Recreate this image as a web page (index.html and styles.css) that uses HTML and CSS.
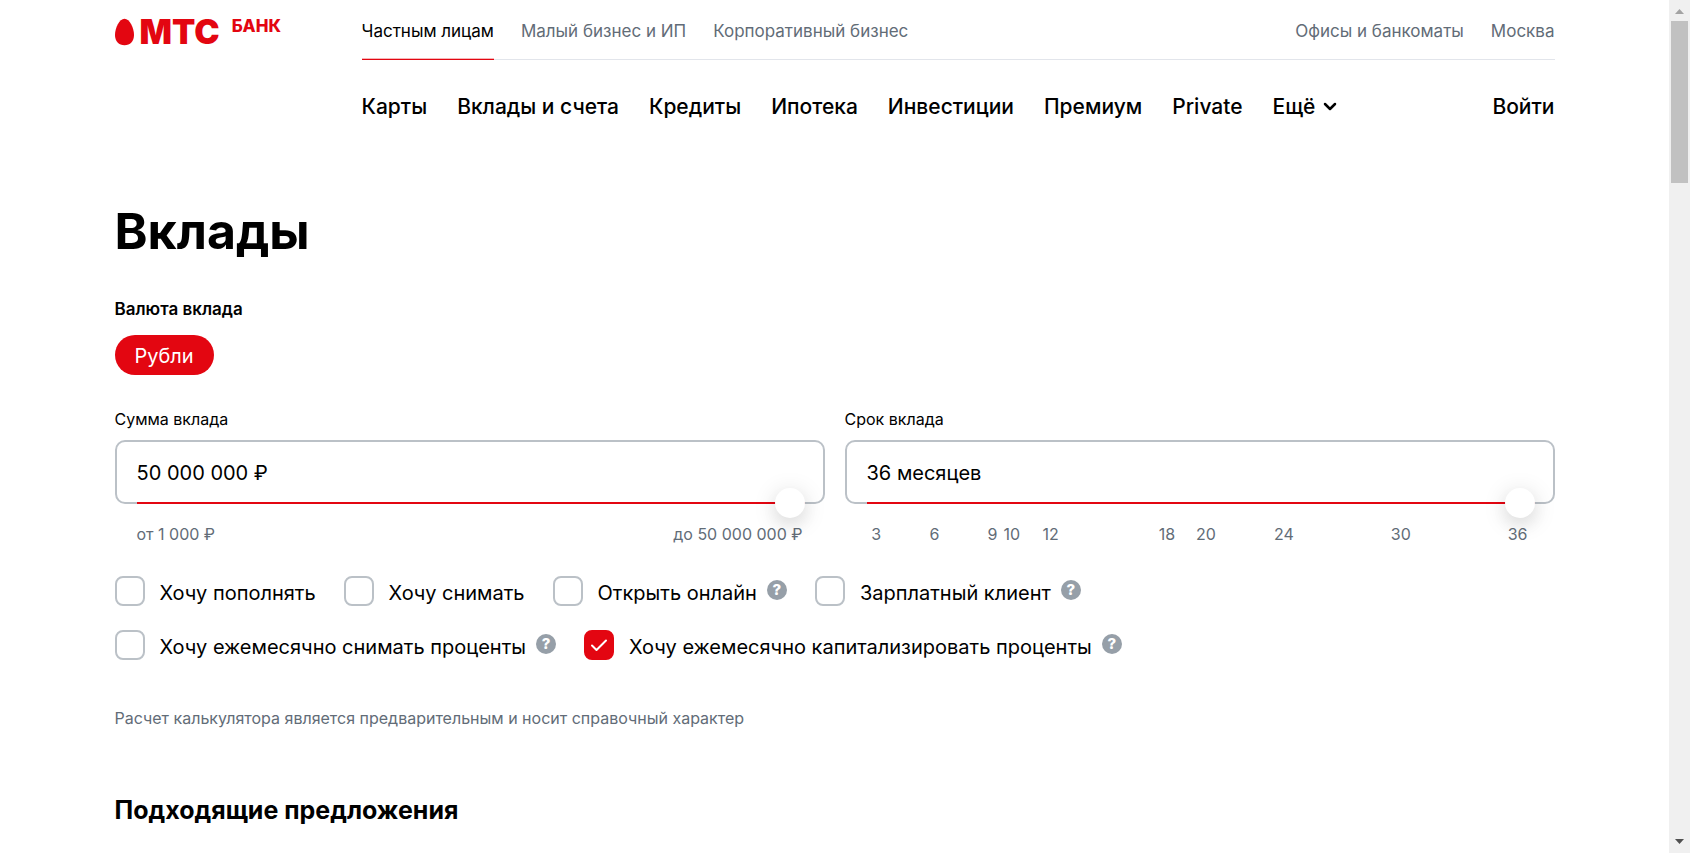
FILE: index.html
```html
<!DOCTYPE html>
<html lang="ru">
<head>
<meta charset="utf-8">
<meta name="viewport" content="width=device-width, initial-scale=1">
<title>Вклады — МТС Банк</title>
<link rel="stylesheet" href="styles.css">
</head>
<body>
<div class="page">
  <header class="header">
    <a class="logo" href="#" aria-label="МТС Банк">
      <svg class="logo__egg" viewBox="0 0 20 28" aria-hidden="true"><path d="M10 0C4.600 0 0 9.600 0 17.200C0 23.800 4 28 10 28S20 23.800 20 17.200C20 9.600 15.400 0 10 0Z"/></svg>
      <span class="logo__name">МТС</span>
      <span class="logo__bank">БАНК</span>
    </a>
    <div class="header__menus">
      <nav class="top-nav" aria-label="Разделы">
        <a class="top-nav__link top-nav__link--active" href="#">Частным лицам</a>
        <a class="top-nav__link" href="#">Малый бизнес и ИП</a>
        <a class="top-nav__link" href="#">Корпоративный бизнес</a>
        <a class="top-nav__link push" href="#">Офисы и банкоматы</a>
        <a class="top-nav__link" href="#">Москва</a>
      </nav>
      <nav class="main-nav" aria-label="Продукты">
        <a href="#">Карты</a>
        <a href="#">Вклады и счета</a>
        <a href="#">Кредиты</a>
        <a href="#">Ипотека</a>
        <a href="#">Инвестиции</a>
        <a href="#">Премиум</a>
        <a href="#">Private</a>
        <button class="more" type="button">Ещё
          <svg class="more__icon" viewBox="0 0 14 10" aria-hidden="true"><path d="M2 2l5 5 5-5"/></svg>
        </button>
        <a class="push" href="#">Войти</a>
      </nav>
    </div>
  </header>

  <main>
    <h1 class="title">Вклады</h1>
    <form class="calculator">
      <p class="currency-label" id="currency">Валюта вклада</p>
      <button class="pill" type="button" aria-describedby="currency">Рубли</button>

      <div class="fields">
        <div class="field">
          <label class="field__label" for="amount">Сумма вклада</label>
          <div class="field__box">
            <input class="field__input" id="amount" type="text" value="50 000 000 ₽">
            <input class="field__range" type="range" min="1000" max="50000000" value="50000000" aria-label="Сумма вклада">
          </div>
          <div class="limits"><span>от 1 000 ₽</span><span>до 50 000 000 ₽</span></div>
        </div>
        <div class="field">
          <label class="field__label" for="term">Срок вклада</label>
          <div class="field__box">
            <input class="field__input" id="term" type="text" value="36 месяцев">
            <input class="field__range" type="range" min="3" max="36" value="36" aria-label="Срок вклада">
          </div>
          <div class="ticks">
            <span style="grid-column:1">3</span>
            <span style="grid-column:4">6</span>
            <span style="grid-column:7">9</span>
            <span style="grid-column:8">10</span>
            <span style="grid-column:10">12</span>
            <span style="grid-column:16">18</span>
            <span style="grid-column:18">20</span>
            <span style="grid-column:22">24</span>
            <span style="grid-column:28">30</span>
            <span style="grid-column:34">36</span>
          </div>
        </div>
      </div>

      <div class="options">
        <div class="options__row">
          <div class="option"><label class="option__label"><input class="check" type="checkbox"><span>Хочу пополнять</span></label></div>
          <div class="option"><label class="option__label"><input class="check" type="checkbox"><span>Хочу снимать</span></label></div>
          <div class="option"><label class="option__label"><input class="check" type="checkbox"><span>Открыть онлайн</span></label><button class="help" type="button">?</button></div>
          <div class="option"><label class="option__label"><input class="check" type="checkbox"><span>Зарплатный клиент</span></label><button class="help" type="button">?</button></div>
        </div>
        <div class="options__row">
          <div class="option"><label class="option__label"><input class="check" type="checkbox"><span>Хочу ежемесячно снимать проценты</span></label><button class="help" type="button">?</button></div>
          <div class="option">
            <label class="option__label">
              <span class="check-wrap">
                <input class="check" type="checkbox" checked>
                <svg class="check-mark" viewBox="0 0 30 30" aria-hidden="true"><path d="M8 15.500l4.500 4.500 9.500-9.500"/></svg>
              </span>
              <span>Хочу ежемесячно капитализировать проценты</span>
            </label><button class="help" type="button">?</button>
          </div>
        </div>
      </div>
      <p class="note">Расчет калькулятора является предварительным и носит справочный характер</p>
    </form>
    <h2 class="subtitle">Подходящие предложения</h2>
  </main>
</div>
<div class="scrollbar" aria-hidden="true">
  <svg class="scrollbar__arrow scrollbar__arrow--off" viewBox="0 0 21 21"><path d="M6 14h9l-4.500-5z"/></svg>
  <div class="scrollbar__thumb"></div>
  <svg class="scrollbar__arrow" viewBox="0 0 21 21"><path d="M6 7h9l-4.500 5z"/></svg>
</div>
</body>
</html>
```
FILE: styles.css
```css
:root {
  --red: #e30611;
  --gray: #626c77;
  --border: #bbc1c7;
}

* { box-sizing: border-box; }

body {
  margin: 0;
  display: flex;
  height: 100vh;
  overflow: hidden;
  background: #fff;
  color: #000;
  font-family: Inter, "Liberation Sans", sans-serif;
  font-size: 20px;
  line-height: 24px;
}

a { color: inherit; text-decoration: none; }
button, input { font: inherit; color: inherit; }
button { border: 0; padding: 0; background: none; cursor: pointer; }
h1, h2, p { margin: 0; }

.page {
  flex: 1;
  min-width: 0;
  overflow: hidden;
  padding: 0 24px;
}
.header, main { max-width: 1440px; margin: 0 auto; }

/* Header */
.header { display: flex; }
.logo {
  display: flex;
  flex: none;
  align-items: flex-start;
  width: 247px;
  padding-top: 18px;
  color: var(--red);
}
.logo__egg { width: 19px; height: 28px; fill: var(--red); }
.logo__name {
  margin-left: 6px;
  font-size: 34px;
  font-weight: 900;
  line-height: 28px;
}
.logo__bank {
  margin-left: 12px;
  font-size: 17px;
  font-weight: 800;
  line-height: 16px;
}
.header__menus { flex: 1; }
.top-nav {
  display: flex;
  gap: 27px;
  height: 60px;
  border-bottom: 1px solid #e2e5eb;
  color: var(--gray);
  font-size: 17px;
  white-space: nowrap;
}
.top-nav__link { height: 60px; line-height: 62px; }
.top-nav__link--active {
  color: #000;
  border-bottom: 1px solid var(--red);
  box-shadow: inset 0 -1px rgba(227, 6, 17, .3);
}
.push { margin-left: auto; }
.main-nav {
  display: flex;
  gap: 30px;
  margin-top: 35px;
  font-size: 21px;
  font-weight: 500;
  white-space: nowrap;
}
.more { display: flex; align-items: center; gap: 8px; font-weight: 500; }
.more__icon {
  width: 14px;
  height: 10px;
  fill: none;
  stroke: #000;
  stroke-width: 2.500;
  stroke-linecap: round;
  stroke-linejoin: round;
}

/* Calculator */
.title {
  margin-top: 84px;
  font-size: 50px;
  font-weight: 700;
  line-height: 56px;
}
.currency-label {
  margin-top: 38px;
  font-size: 17px;
  font-weight: 600;
}
.pill {
  display: block;
  height: 40px;
  margin-top: 14px;
  padding: 2px 20px 0;
  border-radius: 20px;
  background: var(--red);
  color: #fff;
}
.fields {
  display: grid;
  grid-template-columns: 1fr 1fr;
  gap: 20px;
  margin-top: 32px;
}
.field__label { display: block; font-size: 16px; }
.field__box { position: relative; margin-top: 9px; }
.field__input {
  display: block;
  width: 100%;
  height: 64px;
  padding: 2px 20px 0;
  border: 2px solid var(--border);
  border-radius: 10px;
  background: none;
}
.field__range {
  position: absolute;
  left: 22px;
  right: 20px;
  bottom: -14px;
  width: calc(100% - 42px);
  height: 30px;
  margin: 0;
  appearance: none;
  background: linear-gradient(var(--red), var(--red)) center / 100% 2px no-repeat;
}
.field__range::-webkit-slider-thumb {
  appearance: none;
  width: 30px;
  height: 30px;
  border-radius: 50%;
  background: #fff;
  box-shadow: 0 4px 24px rgba(0, 0, 0, .14), 0 8px 16px rgba(0, 0, 0, .06);
}
.limits, .ticks {
  margin: 18px 22px 0;
  color: var(--gray);
  font-size: 16px;
}
.limits { display: flex; justify-content: space-between; }
.ticks {
  display: grid;
  grid-template-columns: repeat(34, 1fr);
  margin-right: 27px;
}
.ticks span { justify-self: center; grid-row: 1; }

.options { display: grid; gap: 24px; margin-top: 30px; }
.options__row { display: flex; flex-wrap: wrap; gap: 24px 28px; }
.option { display: flex; gap: 10px; }
.option__label { display: flex; gap: 15px; line-height: 34px; height: 30px; }
.check {
  appearance: none;
  display: block;
  flex: none;
  width: 30px;
  height: 30px;
  margin: 0;
  border: 2px solid var(--border);
  border-radius: 8px;
}
.check:checked { border-color: var(--red); background: var(--red); }
.check-wrap { position: relative; }
.check-mark {
  position: absolute;
  inset: 0;
  width: 30px;
  height: 30px;
  fill: none;
  stroke: #fff;
  stroke-width: 2;
  stroke-linecap: round;
  stroke-linejoin: round;
  pointer-events: none;
}
.help {
  width: 20px;
  height: 20px;
  margin-top: 4px;
  border-radius: 50%;
  background: #969fa8;
  color: #fff;
  font-size: 15px;
  font-weight: 800;
  line-height: 20px;
}
.note { margin-top: 46px; color: var(--gray); font-size: 16px; }
.subtitle {
  margin-top: 64px;
  font-size: 25px;
  font-weight: 700;
  line-height: 32px;
}

/* Scroll track */
.scrollbar {
  display: flex;
  flex: none;
  flex-direction: column;
  width: 21px;
  background: #f0f0f0;
}
.scrollbar__arrow { width: 21px; height: 21px; fill: #505050; }
.scrollbar__arrow--off { fill: #a3a3a3; }
.scrollbar__thumb {
  height: 19%;
  margin: 0 2px auto;
  background: #c1c1c1;
}
```
